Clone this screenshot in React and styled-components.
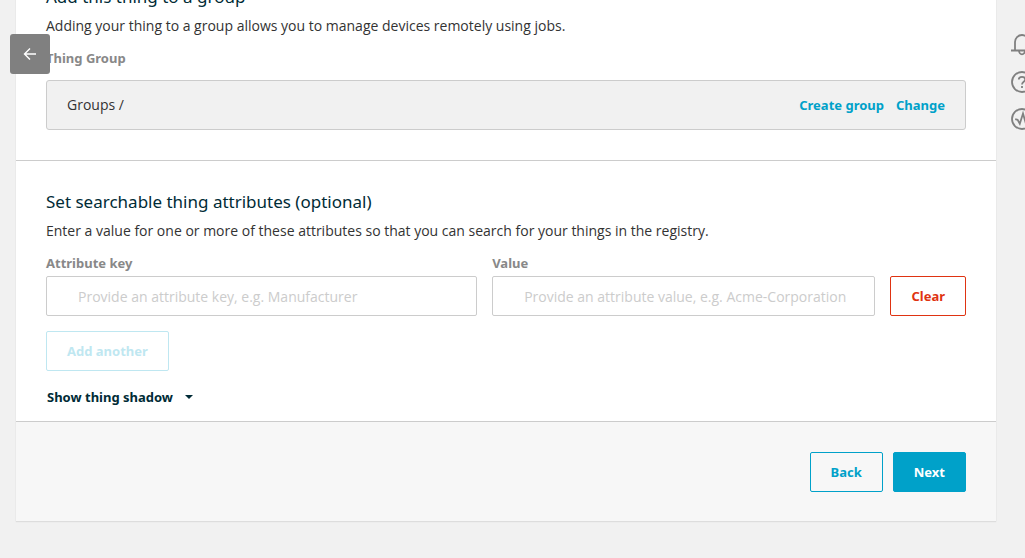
import React, { useState } from 'react';
import styled, { createGlobalStyle, css } from 'styled-components';

const GlobalStyle = createGlobalStyle`
  * {
    box-sizing: border-box;
  }
  body {
    margin: 0;
    background-color: #f1f1f1;
    color: #333;
    font-family: 'Open Sans', 'Noto Sans', sans-serif;
    font-size: 14px;
    line-height: 20px;
    overflow: hidden;
  }
`;

const boldText = css`
  font-family: 'Noto Sans', 'Open Sans', sans-serif;
  font-size: 13px;
  font-weight: 700;
  line-height: 20px;
`;

const Page = styled.div`
  display: flex;
  align-items: flex-start;
  min-height: 100vh;
`;

/* pulled up so that the first section is partly scrolled out */
const Panel = styled.main`
  flex: 1;
  min-width: 0;
  margin: -44px 0 36px 16px;
  background-color: #fff;
  box-shadow: 0 1px 1px #ddd, 0 0 1px #ddd;
`;

const Section = styled.section`
  padding: 30px 30px ${props => props.$bottom}px;
  border-bottom: 1px solid #ccc;
`;

const Heading = styled.h2`
  margin: 0 0 8px;
  color: #002b36;
  font-family: 'Noto Sans', 'Open Sans', sans-serif;
  font-size: 17px;
  font-weight: 400;
  line-height: 22px;
`;

const Description = styled.p`
  margin: 0 0 12px;
`;

const GroupLabel = styled.div`
  ${boldText}
  margin-bottom: 12px;
  color: #888;
`;

const GroupBox = styled.div`
  display: flex;
  align-items: center;
  gap: 12px;
  height: 50px;
  padding: 0 20px;
  border: 1px solid #ccc;
  border-radius: 3px;
  background-color: #f1f1f1;
`;

const GroupPath = styled.span`
  flex: 1;
`;

const GroupLink = styled.a`
  ${boldText}
  color: #00a1c9;
  text-decoration: none;
`;

const AttributeRow = styled.div`
  display: flex;
  align-items: flex-end;
  gap: 15px;
  margin-bottom: 15px;
`;

const Field = styled.div`
  display: flex;
  flex-direction: column;
  flex: ${props => props.$grow} 1 0;
  gap: 3px;
  min-width: 0;
`;

const FieldLabel = styled.label`
  ${boldText}
  color: #888;
`;

const TextInput = styled.input`
  width: 100%;
  height: 40px;
  padding: 0 10px 0 31px;
  border: 1px solid #ccc;
  border-radius: 2px;
  background-color: #fff;
  color: #333;
  font: inherit;

  &::placeholder {
    color: #ccc;
    opacity: 1;
  }
`;

const tones = {
  normal: css`
    border-color: #00a1c9;
    color: #00a1c9;
  `,
  primary: css`
    border-color: #00a1c9;
    background-color: #00a1c9;
    color: #fff;
  `,
  danger: css`
    border-color: #df3312;
    color: #df3312;
  `,
};

const Button = styled.button`
  ${boldText}
  height: 40px;
  padding: 0 20px;
  border: 1px solid;
  border-radius: 2px;
  background-color: transparent;
  cursor: pointer;
  ${props => tones[props.$tone || 'normal']}

  &:disabled {
    border-color: #bfe7f1;
    color: #bfe7f1;
    cursor: default;
  }
`;

const ShadowToggle = styled.button`
  ${boldText}
  display: flex;
  align-items: center;
  gap: 12px;
  margin-top: 16px;
  padding: 0 1px;
  border: 0;
  background: none;
  color: #002b36;
  cursor: pointer;
`;

const Caret = styled.span`
  border: 4px solid transparent;
  border-top-color: #002b36;
  border-bottom-width: 0;
`;

const Footer = styled.footer`
  display: flex;
  justify-content: flex-end;
  gap: 10px;
  padding: 30px 30px 29px;
  background-color: #f7f7f7;
`;

const BackTab = styled.button`
  position: absolute;
  top: 34px;
  left: 10px;
  display: flex;
  align-items: center;
  justify-content: center;
  width: 40px;
  height: 40px;
  padding: 0;
  border: 0;
  border-radius: 3px;
  background-color: #808080;
  color: #fff;
  cursor: pointer;
`;

const Rail = styled.aside`
  display: flex;
  flex: 0 0 29px;
  flex-direction: column;
  gap: 15px;
  padding: 34px 0 0 15px;
  overflow: hidden;
`;

const RailButton = styled.button`
  width: 22px;
  height: 22px;
  padding: 0;
  border: 0;
  background: none;
  color: #808080;
  cursor: pointer;

  svg {
    display: block;
  }
`;

const RailIcon = ({ children }) => (
  <svg width="22" height="22" viewBox="0 0 22 22" fill="none" stroke="currentColor" strokeWidth="1.8">
    {children}
  </svg>
);

export default function App() {
  const [attributeKey, setAttributeKey] = useState('');
  const [attributeValue, setAttributeValue] = useState('');

  const clearAttribute = () => {
    setAttributeKey('');
    setAttributeValue('');
  };

  return (
    <>
      <GlobalStyle />
      <Page>
        <Panel>
          <Section $bottom={30}>
            <Heading>Add this thing to a group</Heading>
            <Description>Adding your thing to a group allows you to manage devices remotely using jobs.</Description>
            <GroupLabel>Thing Group</GroupLabel>
            <GroupBox>
              <GroupPath>Groups /</GroupPath>
              <GroupLink href="#create-group">Create group</GroupLink>
              <GroupLink href="#change">Change</GroupLink>
            </GroupBox>
          </Section>

          <Section $bottom={14}>
            <Heading>Set searchable thing attributes (optional)</Heading>
            <Description>
              Enter a value for one or more of these attributes so that you can search for your things in the registry.
            </Description>
            <AttributeRow>
              <Field $grow={9}>
                <FieldLabel htmlFor="attribute-key">Attribute key</FieldLabel>
                <TextInput
                  id="attribute-key"
                  value={attributeKey}
                  onChange={e => setAttributeKey(e.target.value)}
                  placeholder="Provide an attribute key, e.g. Manufacturer"
                />
              </Field>
              <Field $grow={8}>
                <FieldLabel htmlFor="attribute-value">Value</FieldLabel>
                <TextInput
                  id="attribute-value"
                  value={attributeValue}
                  onChange={e => setAttributeValue(e.target.value)}
                  placeholder="Provide an attribute value, e.g. Acme-Corporation"
                />
              </Field>
              <Button type="button" $tone="danger" onClick={clearAttribute}>Clear</Button>
            </AttributeRow>
            <Button type="button" disabled={!attributeKey}>Add another</Button>
            <ShadowToggle type="button">
              Show thing shadow
              <Caret />
            </ShadowToggle>
          </Section>

          <Footer>
            <Button type="button">Back</Button>
            <Button type="button" $tone="primary">Next</Button>
          </Footer>
        </Panel>

        <Rail>
          <RailButton type="button" aria-label="Notifications">
            <RailIcon>
              <path d="M0 16.5h22M4 16.5V8a7 7 0 0 1 14 0v8.5" />
              <path d="M8 16.5a3 3.8 0 0 0 6 0" />
            </RailIcon>
          </RailButton>
          <RailButton type="button" aria-label="Help">
            <RailIcon>
              <circle cx="11" cy="11" r="10" />
              <path d="M7.8 8.6c0-1.7 1.3-2.8 3.2-2.8s3.2 1.1 3.2 2.7c0 2.3-3.2 2.4-3.2 5.1M11 15v2" />
            </RailIcon>
          </RailButton>
          <RailButton type="button" aria-label="Activity">
            <RailIcon>
              <circle cx="11" cy="11" r="10" />
              <path d="M4.2 11.2l2.4.6 2.2 4 3.2-10.2 2.6 9 1.6-3.4h2" />
            </RailIcon>
          </RailButton>
        </Rail>
      </Page>

      <BackTab type="button" aria-label="Back to the previous page">
        <svg width="14" height="14" viewBox="0 0 14 14" fill="none" stroke="currentColor" strokeWidth="1.4">
          <path d="M13 7H2M7 1.5L1.5 7L7 12.5" />
        </svg>
      </BackTab>
    </>
  );
}
